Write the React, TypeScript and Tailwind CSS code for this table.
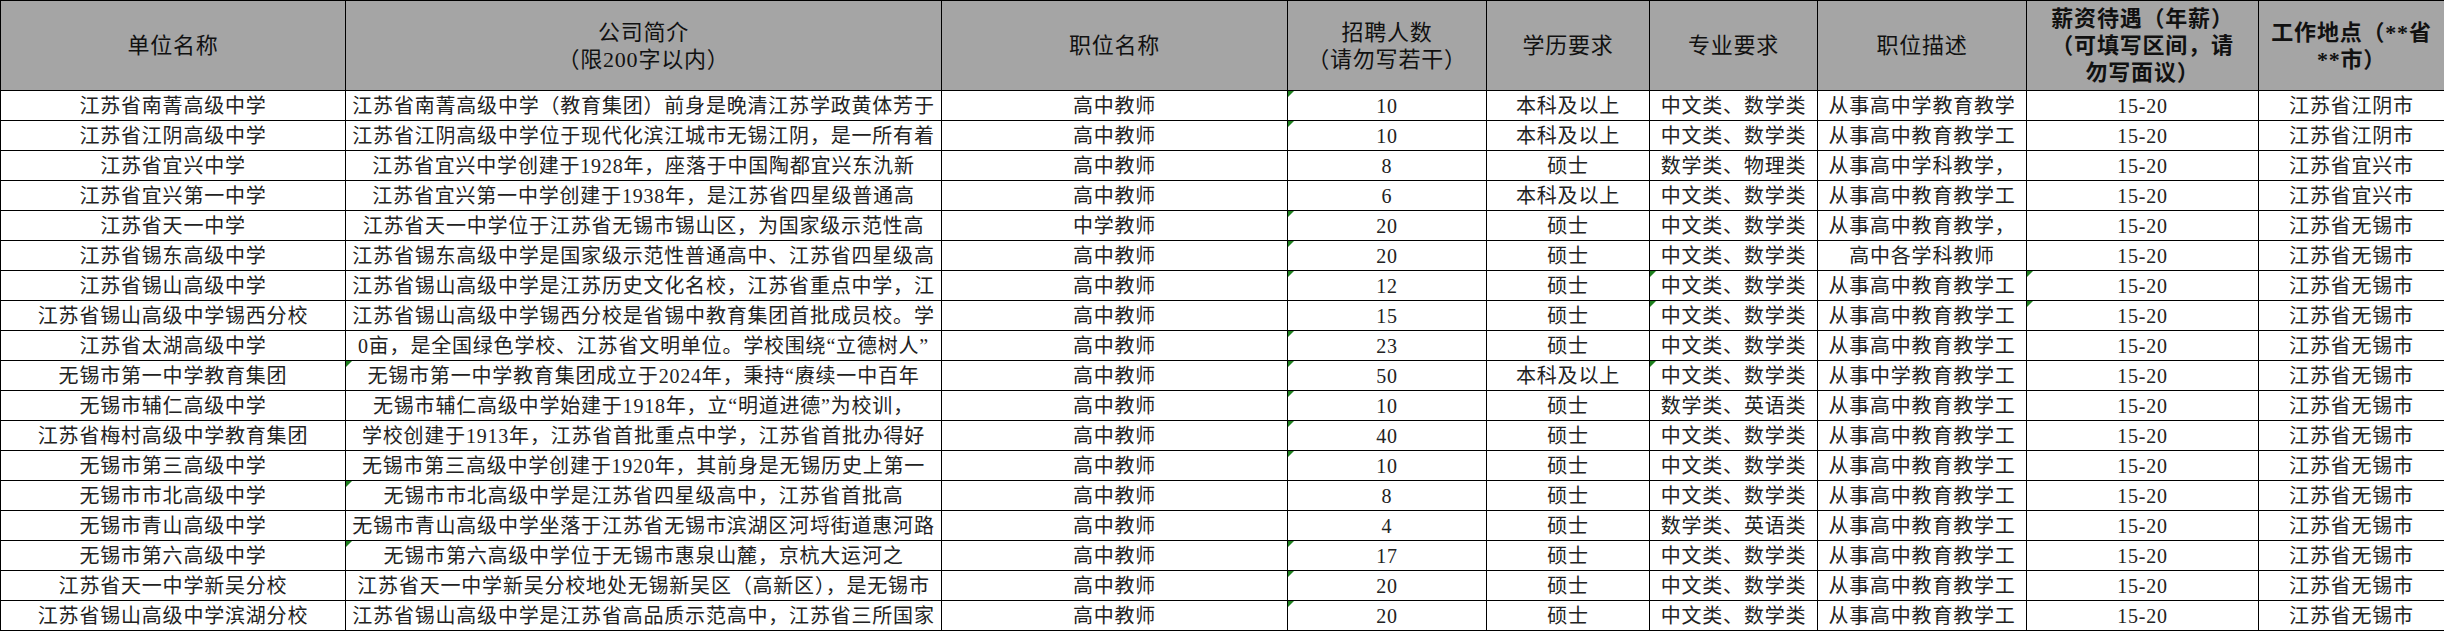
import React from "react";

type Row = {
  unit: string;
  intro: string;
  job: string;
  count: string;
  edu: string;
  major: string;
  desc: string;
  pay: string;
  place: string;
  marks?: number[]; // columns with the green "number as text" corner
};

const ROWS: Row[] = [
  { unit: "江苏省南菁高级中学", intro: "江苏省南菁高级中学（教育集团）前身是晚清江苏学政黄体芳于", job: "高中教师", count: "10", edu: "本科及以上", major: "中文类、数学类", desc: "从事高中学教育教学", pay: "15-20", place: "江苏省江阴市", marks: [3] },
  { unit: "江苏省江阴高级中学", intro: "江苏省江阴高级中学位于现代化滨江城市无锡江阴，是一所有着", job: "高中教师", count: "10", edu: "本科及以上", major: "中文类、数学类", desc: "从事高中教育教学工", pay: "15-20", place: "江苏省江阴市", marks: [3] },
  { unit: "江苏省宜兴中学", intro: "江苏省宜兴中学创建于1928年，座落于中国陶都宜兴东氿新", job: "高中教师", count: "8", edu: "硕士", major: "数学类、物理类", desc: "从事高中学科教学，", pay: "15-20", place: "江苏省宜兴市" },
  { unit: "江苏省宜兴第一中学", intro: "江苏省宜兴第一中学创建于1938年，是江苏省四星级普通高", job: "高中教师", count: "6", edu: "本科及以上", major: "中文类、数学类", desc: "从事高中教育教学工", pay: "15-20", place: "江苏省宜兴市" },
  { unit: "江苏省天一中学", intro: "江苏省天一中学位于江苏省无锡市锡山区，为国家级示范性高", job: "中学教师", count: "20", edu: "硕士", major: "中文类、数学类", desc: "从事高中教育教学，", pay: "15-20", place: "江苏省无锡市", marks: [3] },
  { unit: "江苏省锡东高级中学", intro: "江苏省锡东高级中学是国家级示范性普通高中、江苏省四星级高", job: "高中教师", count: "20", edu: "硕士", major: "中文类、数学类", desc: "高中各学科教师", pay: "15-20", place: "江苏省无锡市", marks: [3] },
  { unit: "江苏省锡山高级中学", intro: "江苏省锡山高级中学是江苏历史文化名校，江苏省重点中学，江", job: "高中教师", count: "12", edu: "硕士", major: "中文类、数学类", desc: "从事高中教育教学工", pay: "15-20", place: "江苏省无锡市", marks: [3, 5, 7] },
  { unit: "江苏省锡山高级中学锡西分校", intro: "江苏省锡山高级中学锡西分校是省锡中教育集团首批成员校。学", job: "高中教师", count: "15", edu: "硕士", major: "中文类、数学类", desc: "从事高中教育教学工", pay: "15-20", place: "江苏省无锡市", marks: [5, 7] },
  { unit: "江苏省太湖高级中学", intro: "0亩，是全国绿色学校、江苏省文明单位。学校围绕“立德树人”", job: "高中教师", count: "23", edu: "硕士", major: "中文类、数学类", desc: "从事高中教育教学工", pay: "15-20", place: "江苏省无锡市", marks: [3] },
  { unit: "无锡市第一中学教育集团", intro: "无锡市第一中学教育集团成立于2024年，秉持“赓续一中百年", job: "高中教师", count: "50", edu: "本科及以上", major: "中文类、数学类", desc: "从事中学教育教学工", pay: "15-20", place: "江苏省无锡市", marks: [1, 3, 5] },
  { unit: "无锡市辅仁高级中学", intro: "无锡市辅仁高级中学始建于1918年，立“明道进德”为校训，", job: "高中教师", count: "10", edu: "硕士", major: "数学类、英语类", desc: "从事高中教育教学工", pay: "15-20", place: "江苏省无锡市", marks: [3] },
  { unit: "江苏省梅村高级中学教育集团", intro: "学校创建于1913年，江苏省首批重点中学，江苏省首批办得好", job: "高中教师", count: "40", edu: "硕士", major: "中文类、数学类", desc: "从事高中教育教学工", pay: "15-20", place: "江苏省无锡市", marks: [3] },
  { unit: "无锡市第三高级中学", intro: "无锡市第三高级中学创建于1920年，其前身是无锡历史上第一", job: "高中教师", count: "10", edu: "硕士", major: "中文类、数学类", desc: "从事高中教育教学工", pay: "15-20", place: "江苏省无锡市", marks: [3] },
  { unit: "无锡市市北高级中学", intro: "无锡市市北高级中学是江苏省四星级高中，江苏省首批高", job: "高中教师", count: "8", edu: "硕士", major: "中文类、数学类", desc: "从事高中教育教学工", pay: "15-20", place: "江苏省无锡市", marks: [1] },
  { unit: "无锡市青山高级中学", intro: "无锡市青山高级中学坐落于江苏省无锡市滨湖区河埒街道惠河路", job: "高中教师", count: "4", edu: "硕士", major: "数学类、英语类", desc: "从事高中教育教学工", pay: "15-20", place: "江苏省无锡市" },
  { unit: "无锡市第六高级中学", intro: "无锡市第六高级中学位于无锡市惠泉山麓，京杭大运河之", job: "高中教师", count: "17", edu: "硕士", major: "中文类、数学类", desc: "从事高中教育教学工", pay: "15-20", place: "江苏省无锡市", marks: [1, 3] },
  { unit: "江苏省天一中学新吴分校", intro: "江苏省天一中学新吴分校地处无锡新吴区（高新区），是无锡市", job: "高中教师", count: "20", edu: "硕士", major: "中文类、数学类", desc: "从事高中教育教学工", pay: "15-20", place: "江苏省无锡市", marks: [3] },
  { unit: "江苏省锡山高级中学滨湖分校", intro: "江苏省锡山高级中学是江苏省高品质示范高中，江苏省三所国家", job: "高中教师", count: "20", edu: "硕士", major: "中文类、数学类", desc: "从事高中教育教学工", pay: "15-20", place: "江苏省无锡市", marks: [3] },
];

const HEADERS: { lines: string[]; bold?: boolean }[] = [
  { lines: ["单位名称"] },
  { lines: ["公司简介", "（限200字以内）"] },
  { lines: ["职位名称"] },
  { lines: ["招聘人数", "（请勿写若干）"] },
  { lines: ["学历要求"] },
  { lines: ["专业要求"] },
  { lines: ["职位描述"] },
  { lines: ["薪资待遇（年薪）", "（可填写区间，请", "勿写面议）"], bold: true },
  { lines: ["工作地点（**省", "**市）"], bold: true },
];

function Cell({ text, last, mark }: { text: string; last: boolean; mark: boolean }) {
  return (
    <div
      className={
        "relative flex h-[30px] items-center justify-center overflow-hidden whitespace-nowrap border-b border-black " +
        (last ? "" : "border-r")
      }
    >
      {mark && (
        <span className="absolute left-0 top-0 h-0 w-0 border-r-[6px] border-t-[6px] border-r-transparent border-t-[#1d7f1d]" />
      )}
      <span className="shrink-0">{text}</span>
    </div>
  );
}

export default function App() {
  return (
    <div className="h-[632px] w-[2444px] overflow-hidden bg-white">
      <div className="grid grid-cols-[345px_596px_346px_199px_163px_168px_209px_232px_185px] border-l border-t border-black font-['Liberation_Serif','Noto_Sans_CJK_SC',serif] text-[20px] tracking-[0.8px] text-[#222]">
        {/* Header */}
        {HEADERS.map((h, i) => (
          <div
            key={i}
            className={
              "flex h-[90px] flex-col items-center justify-center overflow-hidden border-b border-black bg-[#a5a5a5] text-center text-[22px] leading-[27px] text-[#111] " +
              (i === HEADERS.length - 1 ? "" : "border-r ") +
              (h.bold ? "font-bold" : "")
            }
          >
            {h.lines.map((l, j) => (
              <div key={j} className="whitespace-nowrap">{l}</div>
            ))}
          </div>
        ))}

        {/* Rows */}
        {ROWS.map((r, ri) => {
          const cells = [r.unit, r.intro, r.job, r.count, r.edu, r.major, r.desc, r.pay, r.place];
          return cells.map((c, ci) => (
            <Cell
              key={ri + "-" + ci}
              text={c}
              last={ci === cells.length - 1}
              mark={!!r.marks?.includes(ci)}
            />
          ));
        })}
      </div>
    </div>
  );
}
